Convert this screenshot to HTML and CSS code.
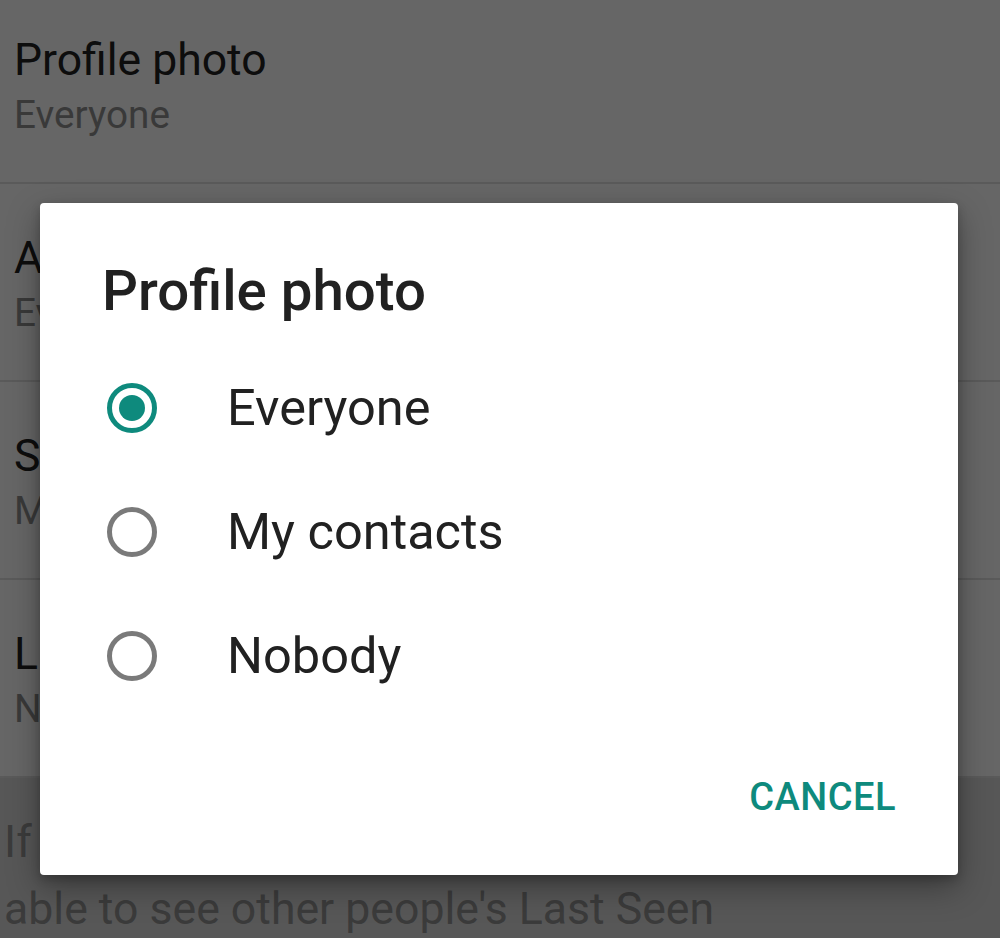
FILE: index.html
```html
<!DOCTYPE html>
<html lang="en">
<head>
<meta charset="utf-8">
<title>Profile photo</title>
<link rel="stylesheet" href="styles.css">
</head>
<body>
<div class="screen">
  <div class="list">
    <div class="row first">
      <div class="row-title">Profile photo</div>
      <div class="row-sub">Everyone</div>
    </div>
    <div class="row">
      <div class="row-title">About</div>
      <div class="row-sub">Everyone</div>
    </div>
    <div class="row">
      <div class="row-title">Status</div>
      <div class="row-sub">My contacts</div>
    </div>
    <div class="row">
      <div class="row-title">Live location</div>
      <div class="row-sub">None</div>
    </div>
  </div>
  <div class="footer">
    <p class="footer-text">If you don't share your Last Seen, you won't be able to see other people's Last Seen</p>
  </div>

  <div class="scrim"></div>

  <div class="dialog" role="dialog">
    <div class="dialog-title">Profile photo</div>
    <div class="options">
      <div class="option">
        <span class="radio checked"><span class="dot"></span></span>
        <span class="option-label">Everyone</span>
      </div>
      <div class="option">
        <span class="radio"></span>
        <span class="option-label">My contacts</span>
      </div>
      <div class="option">
        <span class="radio"></span>
        <span class="option-label">Nobody</span>
      </div>
    </div>
    <div class="actions">
      <span class="btn">CANCEL</span>
    </div>
  </div>
</div>
</body>
</html>
```

FILE: styles.css
```css
html, body {
  margin: 0;
  padding: 0;
}
body {
  width: 1000px;
  height: 938px;
  overflow: hidden;
  font-family: Roboto, "Noto Sans", "Liberation Sans", sans-serif;
  background: #dadada;
}
.screen {
  position: relative;
  width: 1000px;
  height: 938px;
  overflow: hidden;
}
.list {
  background: #ffffff;
}
.row {
  box-sizing: content-box;
  height: 148px;
  padding: 48px 0 0 14px;
  border-bottom: 2px solid #e2e2e2;
}
.row.first {
  margin-top: -14px;
}
.row-title {
  font-size: 44.5px;
  line-height: 52px;
  color: #212121;
}
.row-sub {
  margin-top: 3px;
  font-size: 38.7px;
  line-height: 52px;
  color: #8f8f8f;
}
.footer {
  background: #dadada;
  padding: 31px 0 0 4px;
  height: 200px;
}
.footer-text {
  margin: 0;
  width: 950px;
  font-size: 44.6px;
  line-height: 67px;
  color: #939393;
}
.scrim {
  position: absolute;
  inset: 0;
  background: rgba(0, 0, 0, 0.6);
}
.dialog {
  position: absolute;
  left: 40px;
  top: 203px;
  width: 918px;
  height: 672px;
  box-sizing: border-box;
  background: #ffffff;
  border-radius: 4px;
  box-shadow: 0 12px 32px rgba(0, 0, 0, 0.35), 0 4px 10px rgba(0, 0, 0, 0.2);
  padding: 56px 62px 0 0;
  display: flex;
  flex-direction: column;
}
.dialog-title {
  padding-left: 62px;
  font-size: 56.4px;
  font-weight: 500;
  line-height: 64px;
  color: #212121;
}
.options {
  margin-top: 23px;
  display: flex;
  flex-direction: column;
}
.option {
  height: 124px;
  display: flex;
  align-items: center;
  padding-left: 67px;
}
.radio {
  width: 50px;
  height: 50px;
  box-sizing: border-box;
  border: 5px solid #7a7a7a;
  border-radius: 50%;
  display: flex;
  align-items: center;
  justify-content: center;
  flex: none;
}
.radio.checked {
  border-color: #0e8a7d;
}
.dot {
  width: 26px;
  height: 26px;
  border-radius: 50%;
  background: #0e8a7d;
}
.option-label {
  margin-left: 70px;
  font-size: 50.5px;
  line-height: 124px;
  color: #212121;
}
.actions {
  margin-top: 55px;
  display: flex;
  justify-content: flex-end;
}
.btn {
  font-size: 38px;
  font-weight: 500;
  line-height: 48px;
  color: #0e8a7d;
  letter-spacing: 0.5px;
}
```
